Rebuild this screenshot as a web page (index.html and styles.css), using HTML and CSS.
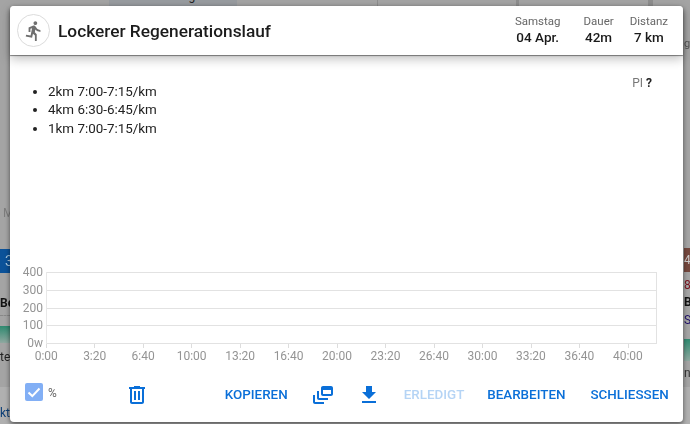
FILE: index.html
```html
<!DOCTYPE html>
<html lang="de">
<head>
<meta charset="utf-8">
<title>Lockerer Regenerationslauf</title>
<link rel="stylesheet" href="styles.css">
</head>
<body>
<div class="backdrop">
  <div class="bg bg-top-card"><span>Belastung ?</span></div>
  <div class="bg bg-line bg-line-a"></div>
  <div class="bg bg-line bg-line-b"></div>
  <div class="bg bg-line bg-line-c"></div>
  <div class="bg bg-band"></div>
  <div class="bg bg-m">M</div>
  <div class="bg bg-blue">3</div>
  <div class="bg bg-be">Be</div>
  <div class="bg bg-dash"></div>
  <div class="bg bg-green"></div>
  <div class="bg bg-te">te</div>
  <div class="bg bg-kti">kti</div>
  <div class="bg bg-g">g</div>
  <div class="bg bg-red">4</div>
  <div class="bg bg-redtext">8</div>
  <div class="bg bg-b">B</div>
  <div class="bg bg-s">S</div>
  <div class="bg bg-green-r"></div>
  <div class="bg bg-na">na</div>
</div>
<main class="dialog">
  <header class="head">
    <div class="avatar">
      <svg class="run" viewBox="0 0 24 24"><path d="M13.49 5.48c1.1 0 2-.9 2-2s-.9-2-2-2-2 .9-2 2 .9 2 2 2zm-3.6 13.9l1-4.4 2.1 2v6h2v-7.5l-2.1-2 .6-3c1.3 1.5 3.3 2.5 5.5 2.5v-2c-1.9 0-3.5-1-4.3-2.4l-1-1.6c-.4-.6-1-1-1.6-1-.3 0-.5.1-.8.1l-5.2 2.2v4.7h2v-3.4l1.8-.7-1.6 8.1-4.9-1-.4 2 7 1.4z"/></svg>
    </div>
    <h1 class="title">Lockerer Regenerationslauf</h1>
    <div class="stats">
      <div class="stat stat-day"><span class="stat-label">Samstag</span><strong class="stat-value">04 Apr.</strong></div>
      <div class="stat stat-dur"><span class="stat-label">Dauer</span><strong class="stat-value">42m</strong></div>
      <div class="stat stat-dist"><span class="stat-label">Distanz</span><strong class="stat-value">7 km</strong></div>
    </div>
  </header>
  <section class="body">
    <ul class="plan">
      <li>2km 7:00-7:15/km</li>
      <li>4km 6:30-6:45/km</li>
      <li>1km 7:00-7:15/km</li>
    </ul>
    <div class="pi">PI <b>?</b></div>
  </section>
  <section class="chart">
    <div class="y-axis"><span>400</span><span>300</span><span>200</span><span>100</span><span>0w</span></div>
    <div class="plot">
      <div class="grid"><i></i><i></i><i></i><i></i><i></i></div>
      <div class="ticks"><i></i><i></i><i></i><i></i><i></i><i></i><i></i><i></i><i></i><i></i><i></i><i></i><i></i></div>
      <div class="x-axis"><span>0:00</span><span>3:20</span><span>6:40</span><span>10:00</span><span>13:20</span><span>16:40</span><span>20:00</span><span>23:20</span><span>26:40</span><span>30:00</span><span>33:20</span><span>36:40</span><span>40:00</span></div>
    </div>
  </section>
  <footer class="actions">
    <div class="check"><svg viewBox="0 0 18 18"><path d="M3.5 9.5l3.8 3.6 7.2-7.6" fill="none" stroke="#fff" stroke-width="2"/></svg></div>
    <span class="percent">%</span>
    <svg class="icon trash" viewBox="0 0 24 24"><path d="M15 4V3H9v1H4v2h1v13c0 1.1.9 2 2 2h10c1.1 0 2-.9 2-2V6h1V4h-5zm2 15H7V6h10v13zM9 8h2v9H9zm4 0h2v9h-2z"/></svg>
    <span class="btn btn-copy">KOPIEREN</span>
    <svg class="icon copies" viewBox="0 0 24 24"><path d="M8 8H6v7c0 1.1.9 2 2 2h9v-2H8V8z"/><path d="M20 3h-8c-1.1 0-2 .9-2 2v6c0 1.1.9 2 2 2h8c1.1 0 2-.9 2-2V5c0-1.1-.9-2-2-2zm0 8h-8V7h8v4z"/><path d="M4 12H2v7c0 1.1.9 2 2 2h9v-2H4v-7z"/></svg>
    <svg class="icon download" viewBox="0 0 24 24"><path d="M19 9h-4V3H9v6H5l7 7 7-7zM5 18v2h14v-2H5z"/></svg>
    <span class="btn btn-done">ERLEDIGT</span>
    <span class="btn btn-edit">BEARBEITEN</span>
    <span class="btn btn-close">SCHLIESSEN</span>
  </footer>
</main>
</body>
</html>
```

FILE: styles.css
```css
* { box-sizing: border-box; }
html, body { margin: 0; height: 100%; }
body {
  width: 690px;
  height: 424px;
  overflow: hidden;
  position: relative;
  background: #a4a4a4;
  font-family: Roboto, sans-serif;
  color: #1a1a1a;
  padding: 6px 0 0 10px;
}
.backdrop { position: absolute; inset: 0; overflow: hidden; filter: blur(.5px); }
.bg { position: absolute; }
.bg-top-card { left: 109px; top: 0; width: 128px; height: 6px; background: #989ca0; overflow: hidden; }
.bg-top-card span { display: block; margin-top: -11px; text-align: center; font-size: 12px; line-height: 14px; color: #222; }
.bg-line { top: 0; width: 1px; height: 6px; background: #8e8e8e; }
.bg-line-a { left: 377px; }
.bg-line-b { left: 516px; width: 3px; }
.bg-line-c { left: 648px; width: 5px; }
.bg-band { left: 0; top: 387px; width: 690px; height: 37px; background: #b0b0b0; }
.bg-m { left: 3px; top: 206px; font-size: 12px; color: #7d7d7d; }
.bg-blue { left: 0; top: 249px; width: 10px; height: 24px; background: #0b5299; color: #a8c8e0; font-size: 14px; padding-left: 5px; line-height: 24px; }
.bg-be { left: 0; top: 296px; font-size: 12px; font-weight: 700; color: #111; }
.bg-dash { left: 0; top: 315px; width: 10px; border-top: 1px dashed #888; }
.bg-green { left: 0; top: 326px; width: 10px; height: 17px; background: linear-gradient(#2f8a70, #8fa8a0); }
.bg-te { left: 0; top: 350px; font-size: 12px; color: #222; }
.bg-kti { left: 0; top: 406px; font-size: 12px; color: #0a3d75; }
.bg-g { left: 684px; top: 37px; font-size: 11px; color: #555; }
.bg-red { left: 684px; top: 248px; width: 6px; height: 24px; background: #74483e; color: #ccc; font-size: 12px; line-height: 24px; }
.bg-redtext { left: 684px; top: 278px; font-size: 12px; color: #7a1420; }
.bg-b { left: 684px; top: 295px; font-size: 12px; font-weight: 700; color: #111; }
.bg-s { left: 684px; top: 313px; font-size: 12px; color: #20106a; }
.bg-green-r { left: 684px; top: 339px; width: 6px; height: 22px; background: linear-gradient(#2f8a70, #8fa8a0); }
.bg-na { left: 684px; top: 366px; font-size: 12px; color: #333; }

.dialog {
  position: relative;
  width: 673px;
  height: 416px;
  background: #fff;
  border-radius: 4px;
  box-shadow: 0 2px 5px rgba(0,0,0,.55);
  display: flex;
  flex-direction: column;
  filter: blur(.3px);
}
.head {
  height: 49px;
  flex: none;
  display: flex;
  align-items: center;
  padding: 0 15px 0 7px;
  border-radius: 4px 4px 0 0;
  box-shadow: 0 1px 1px rgba(0,0,0,.45), 0 4px 11px rgba(0,0,0,.25);
  position: relative;
  background: #fff;
}
.avatar {
  width: 33px;
  height: 33px;
  border: 1px solid #dcdcdc;
  border-radius: 50%;
  display: flex;
  align-items: center;
  justify-content: center;
  flex: none;
}
.run { width: 22px; height: 22px; fill: #6f6f6f; }
.title { margin: 0 0 0 8px; font-size: 17.3px; font-weight: 500; line-height: 24px; color: #1c1c1c; flex: 1; }
.stats { display: flex; text-align: center; margin-top: -3px; }
.stat { display: flex; flex-direction: column; align-items: center; }
.stat-day { margin-right: 23px; }
.stat-dur { margin-right: 16px; }
.stat-label { font-size: 11.5px; line-height: 15px; color: #666; }
.stat-value { font-size: 13.5px; font-weight: 500; line-height: 16px; color: #1a1a1a; }

.body { height: 217px; flex: none; position: relative; padding: 28px 0 0 0; }
.plan { margin: 0; padding: 0 0 0 38px; font-size: 13.4px; line-height: 18.3px; color: #222; }
.pi { position: absolute; right: 31px; top: 20px; font-size: 12px; line-height: 16px; color: #777; }
.pi b { color: #222; }

.chart { flex: none; display: flex; align-items: flex-start; }
.y-axis { flex: none; width: 33px; height: 72px; margin-right: 3px; display: flex; flex-direction: column; justify-content: space-between; text-align: right; font-size: 12px; color: #949494; }
.y-axis span { display: block; height: 1px; line-height: 1px; }
.plot { flex: none; width: 611px; }
.grid { height: 72px; display: flex; flex-direction: column; justify-content: space-between; border-right: 1px solid #e2e2e2; border-left: 1px solid #e8e8e8; }
.grid i { display: block; height: 1px; background: #e2e2e2; }
.ticks { display: flex; height: 4px; }
.ticks i { flex: 0 0 48.47px; border-left: 1px solid #ddd; }
.x-axis { display: flex; margin: 1px 0 0 -24px; font-size: 12px; line-height: 14px; color: #949494; }
.x-axis span { flex: 0 0 48.47px; text-align: center; }

.actions { flex: 1; display: flex; align-items: center; padding: 4px 0 0 15px; }
.check { width: 18px; height: 18px; border-radius: 2px; background: #82aff5; margin-top: -5px; flex: none; }
.check svg { display: block; }
.percent { margin: -4px 0 0 5px; font-size: 12px; color: #666; }
.icon { width: 24px; height: 24px; fill: #0a6fd8; flex: none; }
.btn { font-size: 13.4px; font-weight: 500; line-height: 16px; color: #0a6fd8; white-space: nowrap; }
.trash { margin-left: 68px; }
.btn-copy { margin-left: 76px; }
.copies { margin-left: 23px; }
.download { margin-left: 22px; }
.btn-done { margin-left: 23px; color: #b5d4f5; }
.btn-edit { margin-left: 23px; }
.btn-close { margin-left: 25px; }
```
